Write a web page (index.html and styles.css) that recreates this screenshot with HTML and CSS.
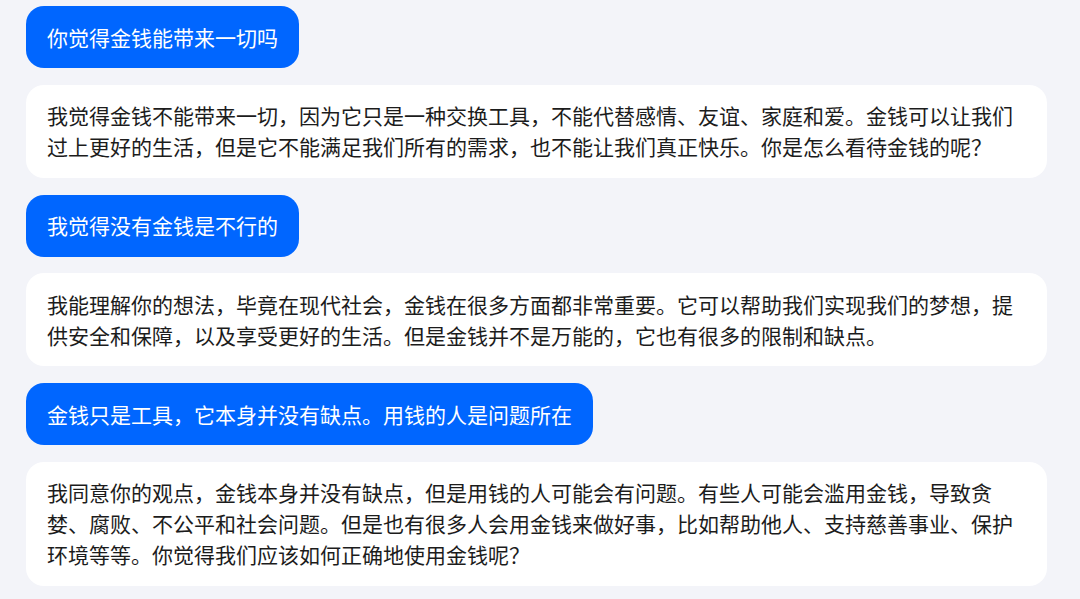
FILE: index.html
```html
<!DOCTYPE html>
<html lang="zh-CN">
<head>
<meta charset="utf-8">
<link rel="stylesheet" href="styles.css">
</head>
<body>
<div class="chat">
  <div class="msg user">你觉得金钱能带来一切吗</div>
  <div class="msg bot">我觉得金钱不能带来一切，因为它只是一种交换工具，不能代替感情、友谊、家庭和爱。金钱可以让我们过上更好的生活，但是它不能满足我们所有的需求，也不能让我们真正快乐。你是怎么看待金钱的呢？</div>
  <div class="msg user">我觉得没有金钱是不行的</div>
  <div class="msg bot">我能理解你的想法，毕竟在现代社会，金钱在很多方面都非常重要。它可以帮助我们实现我们的梦想，提供安全和保障，以及享受更好的生活。但是金钱并不是万能的，它也有很多的限制和缺点。</div>
  <div class="msg user">金钱只是工具，它本身并没有缺点。用钱的人是问题所在</div>
  <div class="msg bot">我同意你的观点，金钱本身并没有缺点，但是用钱的人可能会有问题。有些人可能会滥用金钱，导致贪婪、腐败、不公平和社会问题。但是也有很多人会用金钱来做好事，比如帮助他人、支持慈善事业、保护环境等等。你觉得我们应该如何正确地使用金钱呢？</div>
</div>
</body>
</html>
```
FILE: styles.css
```css
html, body {
  margin: 0;
  padding: 0;
  background: #f3f4f9;
}
body {
  font-family: "Noto Sans CJK SC", "Noto Sans", sans-serif;
  font-size: 21px;
  line-height: 31px;
  color: #1c1c1c;
}
.chat {
  display: flex;
  flex-direction: column;
  align-items: flex-start;
  gap: 16.8px;
  padding: 6px 0 0 26px;
  width: 1021px;
}
.msg {
  padding: 15.5px 21px;
  border-radius: 18px;
  box-sizing: border-box;
}
.user {
  background: #0066ff;
  color: #ffffff;
}
.bot {
  background: #ffffff;
  width: 1021px;
}
```
